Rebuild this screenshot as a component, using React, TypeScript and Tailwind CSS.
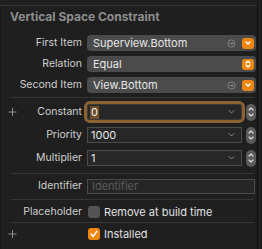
import React from "react";

const font = { fontFamily: "Inter, 'Liberation Sans', sans-serif" };

function OrangeDown() {
  return (
    <div className="w-[12px] h-[11px] rounded-[3px] bg-[#ee8610] flex items-center justify-center">
      <svg width="8" height="6" viewBox="0 0 8 6">
        <path d="M2 2 L4 4 L6 2" stroke="white" strokeWidth="1.4" fill="none" strokeLinecap="round" strokeLinejoin="round" />
      </svg>
    </div>
  );
}

function OrangeUpDown() {
  return (
    <div className="w-[12px] h-[11px] rounded-[3px] bg-[#ee8610] flex items-center justify-center">
      <svg width="8" height="10" viewBox="0 0 8 10">
        <path d="M2 4 L4 2 L6 4" stroke="white" strokeWidth="1.3" fill="none" strokeLinecap="round" strokeLinejoin="round" />
        <path d="M2 6 L4 8 L6 6" stroke="white" strokeWidth="1.3" fill="none" strokeLinecap="round" strokeLinejoin="round" />
      </svg>
    </div>
  );
}

function CircleArrow() {
  return (
    <svg width="9" height="9" viewBox="0 0 9 9">
      <circle cx="4.5" cy="4.5" r="3.6" stroke="#8a8a8a" strokeWidth="0.9" fill="none" />
      <path d="M2.6 4.5 H6.2 M4.8 3.1 L6.2 4.5 L4.8 5.9" stroke="#8a8a8a" strokeWidth="0.9" fill="none" />
    </svg>
  );
}

function Stepper() {
  return (
    <div className="w-[10px] h-[17px] rounded-full bg-[#5b5b5b] ml-[4px] flex flex-col items-center justify-center gap-[1px]">
      <svg width="8" height="14" viewBox="0 0 8 14">
        <path d="M2 5 L4 3 L6 5" stroke="#e0e0e0" strokeWidth="1.1" fill="none" strokeLinecap="round" strokeLinejoin="round" />
        <path d="M2 9 L4 11 L6 9" stroke="#e0e0e0" strokeWidth="1.1" fill="none" strokeLinecap="round" strokeLinejoin="round" />
      </svg>
    </div>
  );
}

function FieldChevron() {
  return (
    <svg width="7" height="5" viewBox="0 0 7 5" className="absolute right-[6px] top-1/2 -translate-y-1/2">
      <path d="M1 1 L3.5 3.5 L6 1" stroke="#8a8a8a" strokeWidth="1" fill="none" strokeLinecap="round" strokeLinejoin="round" />
    </svg>
  );
}

function Label({ children }: { children: React.ReactNode }) {
  return (
    <div className="w-[81px] text-right text-[10.5px] leading-none text-[#cfcfcf] pr-0 shrink-0">{children}</div>
  );
}

function Sep({ className }: { className: string }) {
  return <div className={"ml-[10px] w-[243px] h-px bg-[#363636] " + className} />;
}

function Plus() {
  return (
    <svg width="9" height="9" viewBox="0 0 9 9" className="absolute left-[7px] top-1/2 -translate-y-1/2">
      <path d="M4.5 0.5 V8.5 M0.5 4.5 H8.5" stroke="#8e8e8e" strokeWidth="1" />
    </svg>
  );
}

function PopupRow({ label, value, arrow, updown, className }: { label: string; value: string; arrow?: boolean; updown?: boolean; className?: string }) {
  return (
    <div className={"flex items-center h-[16px] " + (className ?? "")}>
      <Label>{label}</Label>
      <div className="ml-[5px] w-[169px] h-[16px] rounded-[4px] bg-[#4b4b4b] flex items-center pl-[6px] pr-[2px]">
        <span className="flex-1 text-[11px] leading-none text-[#e6e6e6]">{value}</span>
        {arrow && <div className="mr-[6px] flex items-center"><CircleArrow /></div>}
        {updown ? <OrangeUpDown /> : <OrangeDown />}
      </div>
    </div>
  );
}

function FieldRow({ label, value, focus, plus, className }: { label: string; value: string; focus?: boolean; plus?: boolean; className?: string }) {
  return (
    <div className={"relative flex items-center h-[16px] " + (className ?? "")}>
      {plus && <Plus />}
      <Label>{label}</Label>
      <div
        className={
          "relative ml-[5px] w-[155px] h-[16px] bg-[#272727] border flex items-center pl-[2px] " +
          (focus ? "border-[#3a3a3a] outline-[3px] outline-solid outline-[#8b6331] rounded-[3px]" : "border-[#4a4a4a]")
        }
      >
        {focus ? (
          <span className="bg-[#6f4d26] text-[11px] leading-[13px] text-[#f0f0f0] px-[1px]">{value}</span>
        ) : (
          <span className="text-[11px] leading-none text-[#e6e6e6] pl-[1px]">{value}</span>
        )}
        <FieldChevron />
      </div>
      <Stepper />
    </div>
  );
}

function Check({ checked }: { checked?: boolean }) {
  return checked ? (
    <div className="w-[12px] h-[12px] rounded-[3px] bg-[#ee8610] flex items-center justify-center">
      <svg width="10" height="10" viewBox="0 0 10 10">
        <path d="M2.2 5.2 L4.2 7.4 L7.8 2.4" stroke="white" strokeWidth="1.6" fill="none" strokeLinecap="round" strokeLinejoin="round" />
      </svg>
    </div>
  ) : (
    <div className="w-[12px] h-[12px] rounded-[3px] bg-[#545454]" />
  );
}

export default function App() {
  return (
    <div className="w-[262px] h-[249px] bg-[#1f1f1f] flex" style={font}>
      <div className="w-[258px] h-full flex flex-col border-r border-[#111111]">
        <div className="mt-[5px] h-px bg-[#363636]" />
        <div className="flex-1 flex flex-col border-l border-[#161616]">
          <div className="h-[22px] flex items-center pl-[9px] text-[12px] font-bold text-[#8d8d8d] leading-none">
            Vertical Space Constraint
          </div>
          <PopupRow className="mt-[7px]" label="First Item" value="Superview.Bottom" arrow />
          <PopupRow className="mt-[5px]" label="Relation" value="Equal" updown />
          <PopupRow className="mt-[5px]" label="Second Item" value="View.Bottom" arrow />
          <Sep className="mt-[4px]" />
          <FieldRow className="mt-[6px]" label="Constant" value="0" focus plus />
          <FieldRow className="mt-[7px]" label="Priority" value="1000" />
          <FieldRow className="mt-[7px]" label="Multiplier" value="1" />
          <Sep className="mt-[7px]" />
          <div className="mt-[5px] flex items-center h-[15px]">
            <Label>Identifier</Label>
            <div className="ml-[5px] w-[168px] h-[15px] bg-[#262626] border border-[#4a4a4a] flex items-center pl-[4px]">
              <span className="text-[11px] leading-none text-[#5c5c5c]">Identifier</span>
            </div>
          </div>
          <Sep className="mt-[5px]" />
          <div className="mt-[6px] flex items-center h-[12px]">
            <Label>Placeholder</Label>
            <div className="ml-[6px]"><Check /></div>
            <span className="ml-[4px] text-[11px] leading-none text-[#e0e0e0]">Remove at build time</span>
          </div>
          <Sep className="mt-[4px]" />
          <div className="relative mt-[5px] flex items-center h-[12px]">
            <Plus />
            <div className="w-[81px] shrink-0" />
            <div className="ml-[6px]"><Check checked /></div>
            <span className="ml-[4px] text-[11px] leading-none text-[#e0e0e0]">Installed</span>
          </div>
        </div>
      </div>
    </div>
  );
}
